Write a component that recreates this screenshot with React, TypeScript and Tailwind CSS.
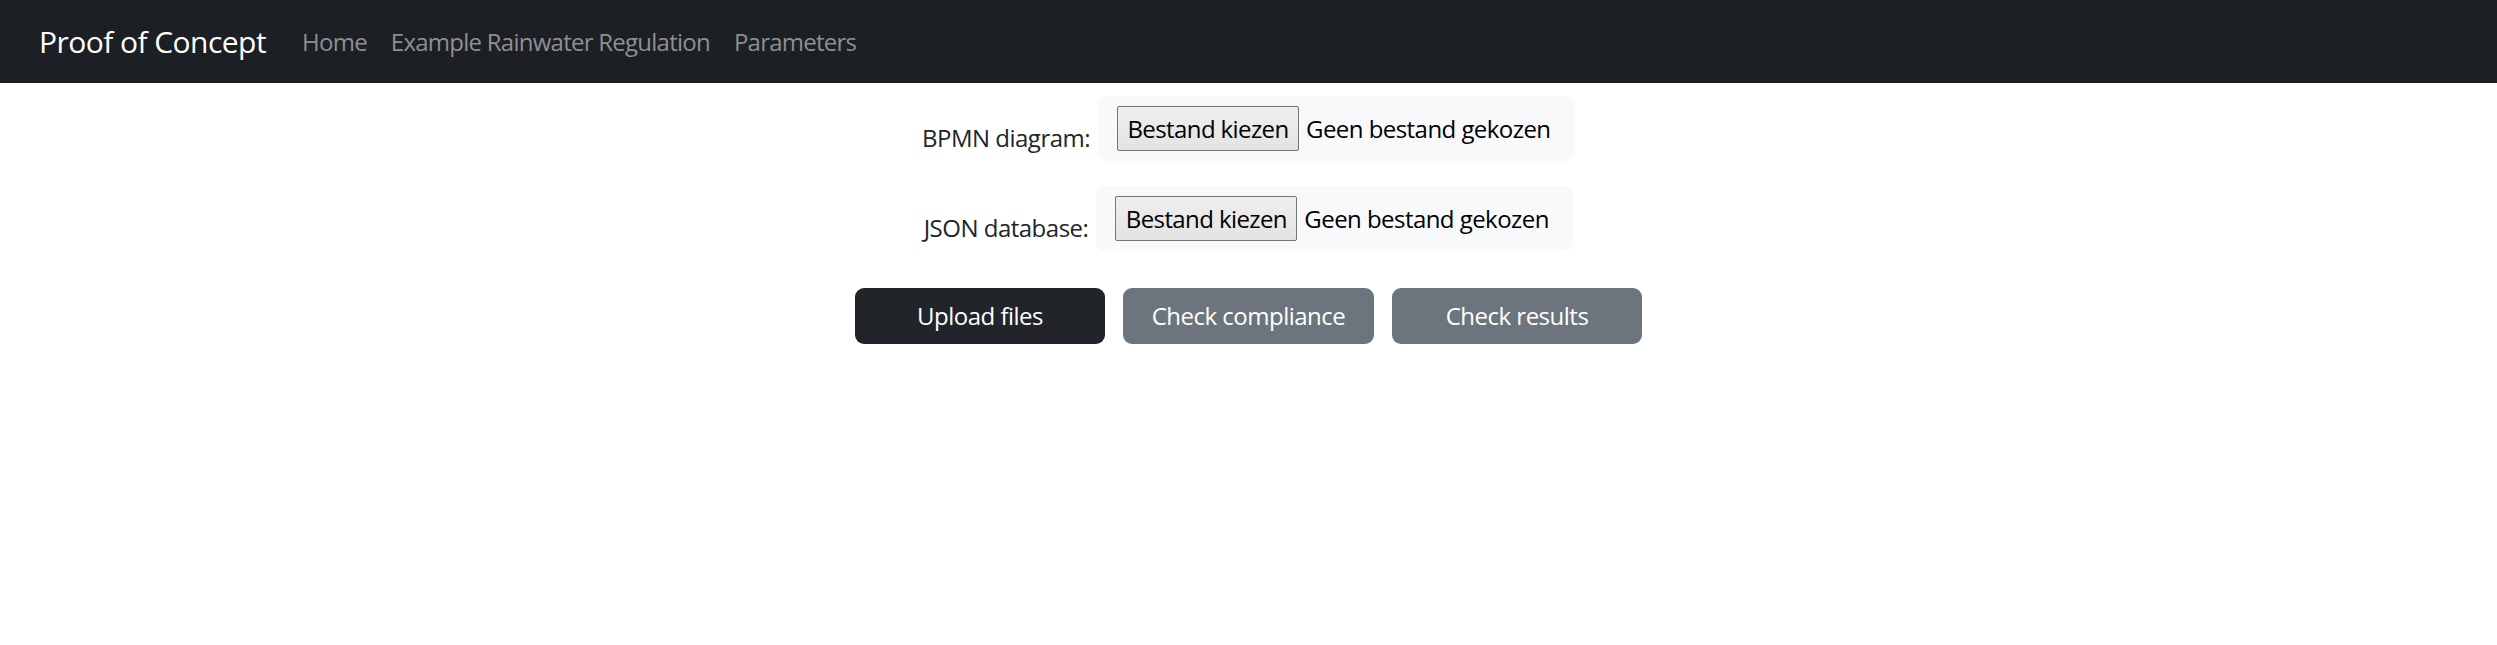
import React from "react";

const font = { fontFamily: '"Open Sans", "Noto Sans", sans-serif' };

function FileRow({ label }: { label: string }) {
  return (
    <div className="flex items-end justify-center gap-[8px]">
      <label className="text-[24px] leading-[36px] text-[#212529] mb-[5px] tracking-[-0.5px]">{label}</label>
      <div className="w-[477px] h-[65px] bg-[#f8f9fa] rounded-[9px] flex items-center pl-[19px] gap-[7px]">
        <button className="w-[182px] h-[45px] border border-[#767676] bg-gradient-to-b from-[#efefef] to-[#e3e3e3] rounded-[2px] text-[24px] leading-none text-black tracking-[-0.6px] flex items-center justify-center">
          Bestand kiezen
        </button>
        <span className="text-[24px] text-black tracking-[-0.55px]">Geen bestand gekozen</span>
      </div>
    </div>
  );
}

export default function App() {
  return (
    <div className="w-full min-h-[645px] bg-white" style={font}>
      <nav className="h-[83px] bg-[#1c1f23] flex items-center pl-[39px]">
        <span className="text-[30px] text-white tracking-[-0.55px] mr-[36px]">Proof of Concept</span>
        <div className="flex items-center gap-[24px] text-[24px] text-[#8e9092] tracking-[-0.75px]">
          <a>Home</a>
          <a>Example Rainwater Regulation</a>
          <a>Parameters</a>
        </div>
      </nav>
      <main className="flex flex-col items-center pt-[13px]">
        <div className="flex flex-col gap-[25px]">
          <FileRow label="BPMN diagram:" />
          <FileRow label="JSON database:" />
        </div>
        <div className="flex gap-[18px] mt-[37px]">
          <button className="w-[250px] h-[56px] rounded-[9px] bg-[#212529] text-white text-[24px] tracking-[-0.5px]">Upload files</button>
          <button className="w-[251px] h-[56px] rounded-[9px] bg-[#6c757d] text-white text-[24px] tracking-[-0.5px]">Check compliance</button>
          <button className="w-[250px] h-[56px] rounded-[9px] bg-[#6c757d] text-white text-[24px] tracking-[-0.5px]">Check results</button>
        </div>
      </main>
    </div>
  );
}
